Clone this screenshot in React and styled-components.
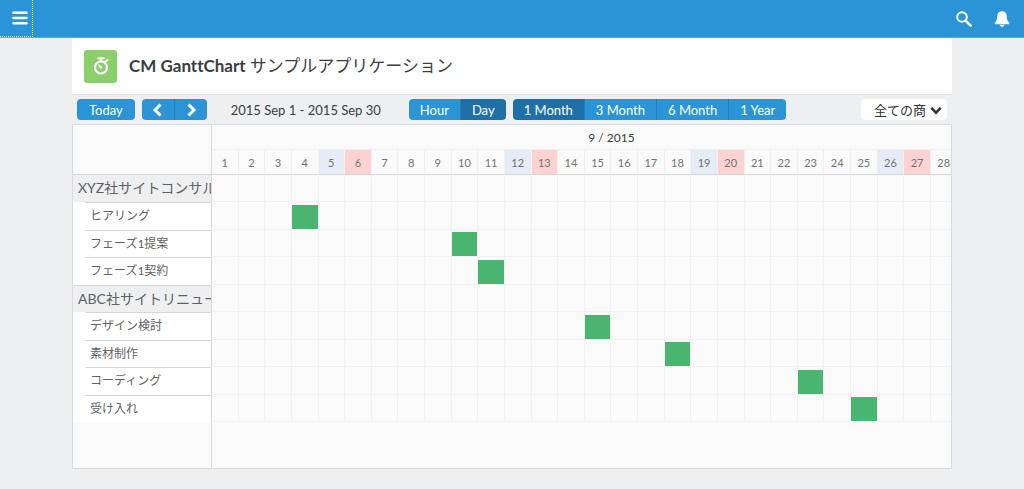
import React, { useState } from 'react'
import styled, { createGlobalStyle } from 'styled-components'

const GlobalStyle = createGlobalStyle`
* {
  box-sizing: border-box;
}
body {
  margin: 0;
  background: #eeeff1;
  color: #3a3d40;
  font-family: Lato, "Noto Sans CJK JP", sans-serif;
  font-size: 13px;
}
button, select {
  font-family: inherit;
  font-size: 13px;
  border: none;
  margin: 0;
  padding: 0;
  cursor: pointer;
}
`

const TopBar = styled.header`
display: flex;
align-items: center;
justify-content: space-between;
height: 38px;
background: #2a94d6;
border-bottom: 1px solid #55abe2;
`
const MenuButton = styled.button`
display: flex;
align-items: center;
justify-content: flex-end;
width: 33px;
height: 37px;
padding-right: 4px;
background: transparent;
border-right: 1px dotted #d4e9f7;
border-bottom: 1px dotted #d4e9f7;
`
const TopActions = styled.div`
display: flex;
gap: 22px;
padding-right: 14px;
`
const IconButton = styled.button`
display: flex;
background: transparent;
`
const Page = styled.main`
margin: 0 72px 20px;
`
const TitleCard = styled.div`
display: flex;
align-items: center;
gap: 12px;
height: 57px;
padding-left: 12px;
background: white;
border-bottom: 1px solid #e0e5ea;
`
const AppIcon = styled.div`
display: flex;
align-items: center;
justify-content: center;
width: 33px;
height: 33px;
background: #8bcf6a;
border-radius: 3px;
`
const Title = styled.h1`
margin: 0;
font-size: 17px;
font-weight: 700;
line-height: 24px;
font-variant-ligatures: none;
`
const TitleSub = styled.span`
font-weight: 400;
`
const Toolbar = styled.div`
display: flex;
align-items: center;
height: 29px;
padding: 0 5px;
`
const ButtonGroup = styled.div`
display: flex;
margin-right: 7px;
border-radius: 4px;
overflow: hidden;
`
const ToolButton = styled.button`
display: flex;
align-items: center;
justify-content: center;
height: 21px;
padding: 0 ${props => props.$pad || 11}px;
background: ${props => props.$active ? '#1f70a6' : '#2a94d6'};
color: white;
line-height: 20px;
& + & {
  border-left: 1px solid #2381bd;
}
`
const Period = styled.div`
padding: 0 28px 0 17px;
line-height: 20px;
`
const FilterBox = styled.div`
display: grid;
align-items: center;
width: 86px;
margin-left: auto;
color: #333;
& > * {
  grid-area: 1 / 1;
}
& > svg {
  justify-self: end;
  margin-right: 5px;
  pointer-events: none;
}
`
const Filter = styled.select`
appearance: none;
width: 100%;
height: 21px;
padding: 0 20px 0 13px;
background: white;
color: inherit;
border-radius: 4px;
`
const ChartPanel = styled.div`
overflow: hidden;
background: #fafafa;
border: 1px solid #d8dadc;
`
const Chart = styled.table`
width: calc(100% + 60px);
height: 343px;
table-layout: fixed;
border-collapse: separate;
border-spacing: 0;
`
const NameCol = styled.col`
width: 139px;
`
const Cell = styled.td`
padding: 0;
border-right: 1px solid #f2f2f3;
border-bottom: 1px solid #f2f2f3;
vertical-align: bottom;
`
const Corner = styled.td`
padding: 0;
border-right: 1px solid #d8dadc;
border-bottom: 1px solid #d2d4d6;
`
const MonthHead = styled.th`
height: 25px;
padding: 0;
border-bottom: 1px solid #efeff0;
font-size: 12px;
font-weight: 400;
`
const DayHead = styled.th`
height: 25px;
padding: 0;
background: ${props => props.$weekend === 'sat' ? '#e5ecf5' : props.$weekend === 'sun' ? '#ffd2d2' : 'transparent'};
border-right: 1px solid #f0f0f1;
border-bottom: 1px solid #d2d4d6;
color: #707274;
font-size: 11px;
font-weight: 400;
`
const NameCell = styled.th`
padding: ${props => props.$group ? 0 : '0 0 0 12px'};
background: ${props => props.$group ? '#eeeff0' : 'white'};
border-right: 1px solid #d8dadc;
color: #5f6164;
font-size: ${props => props.$group ? 14 : 12}px;
font-weight: 400;
text-align: left;
vertical-align: top;
white-space: nowrap;
overflow: hidden;
`
const TaskName = styled.div`
height: 27px;
padding-left: 5px;
border-top: 1px solid #d4d6d8;
line-height: 25px;
`
const GroupName = styled.div`
height: 27px;
padding-left: 5px;
line-height: 25px;
tr:not(:first-child) > th > & {
  border-top: 1px solid #d4d6d8;
}
`
const Filler = styled.td`
height: 46px;
padding: 0;
border-right: 1px solid #d8dadc;
`
const Bar = styled.div`
height: 24px;
background: #4ab471;
`

const rows = [
    { name: 'XYZ社サイトコンサル', group: true },
    { name: 'ヒアリング', day: 4 },
    { name: 'フェーズ1提案', day: 10 },
    { name: 'フェーズ1契約', day: 11 },
    { name: 'ABC社サイトリニュー', group: true },
    { name: 'デザイン検討', day: 15 },
    { name: '素材制作', day: 18 },
    { name: 'コーディング', day: 23 },
    { name: '受け入れ', day: 25 }
]
const days = Array.from({ length: 30 }, (_, i) => i + 1)
const units = ['Hour', 'Day']
const ranges = ['1 Month', '3 Month', '6 Month', '1 Year']

const weekendOf = (day) => {
    // September 2015 starts on a Tuesday
    if (day % 7 === 5) return 'sat'
    if (day % 7 === 6) return 'sun'
    return undefined
}

const Chevron = ({ d, size = 14 }) => (
    <svg width={size} height={size} viewBox='0 0 14 14' fill='none' stroke='currentColor' strokeWidth='3'>
        <path d={d} />
    </svg>
)

const MenuIcon = () => (
    <svg width='16' height='14' viewBox='0 0 16 14' stroke='white' strokeWidth='2.6' strokeLinecap='round'>
        <path d='M1.5 1.8h13M1.5 7h13M1.5 12.2h13' />
    </svg>
)
const SearchIcon = () => (
    <svg width='16' height='16' viewBox='0 0 16 16' fill='none' stroke='white'>
        <circle cx='6' cy='6' r='4.8' strokeWidth='2' />
        <path d='M9.6 9.6L14.6 14.6' strokeWidth='2.6' strokeLinecap='round' />
    </svg>
)
const BellIcon = () => (
    <svg width='16' height='16' viewBox='0 0 16 16' fill='white'>
        <path d='M8 0.3C5 0.3 3.4 2.3 3.3 5C3.2 8.4 2.6 10 0.9 11.6C0.2 12.4 0.5 13.2 1.4 13.2H14.6C15.5 13.2 15.8 12.4 15.1 11.6C13.4 10 12.8 8.4 12.7 5C12.6 2.3 11 0.3 8 0.3Z' />
        <path d='M5.6 13.8H10.4C10 15.2 9.2 15.9 8 15.9C6.8 15.9 6 15.2 5.6 13.8Z' />
    </svg>
)
const StopwatchIcon = () => (
    <svg width='18' height='20' viewBox='0 0 18 20' fill='none' stroke='white'>
        <circle cx='9' cy='11.5' r='6' strokeWidth='2.2' />
        <path d='M6.2 2.3H11.8' strokeWidth='2' strokeLinecap='round' />
        <path d='M9 2.5V5.5' strokeWidth='2.2' />
        <path d='M13.4 5.8L15.4 4' strokeWidth='2' strokeLinecap='round' />
        <path d='M6.3 8.6L9.4 10.3C10.6 11.3 9.4 13.2 8 12.1Z' fill='white' strokeWidth='0.6' />
    </svg>
)

const App = () => {
    const [unit, setUnit] = useState('Day')
    const [range, setRange] = useState('1 Month')
    return (
        <>
            <GlobalStyle />
            <TopBar>
                <MenuButton aria-label='Menu'><MenuIcon /></MenuButton>
                <TopActions>
                    <IconButton aria-label='Search'><SearchIcon /></IconButton>
                    <IconButton aria-label='Notifications'><BellIcon /></IconButton>
                </TopActions>
            </TopBar>
            <Page>
                <TitleCard>
                    <AppIcon><StopwatchIcon /></AppIcon>
                    <Title>CM GanttChart <TitleSub>サンプルアプリケーション</TitleSub></Title>
                </TitleCard>
                <Toolbar>
                    <ButtonGroup>
                        <ToolButton $pad={12}>Today</ToolButton>
                    </ButtonGroup>
                    <ButtonGroup>
                        <ToolButton $pad={9} aria-label='Previous'><Chevron d='M9.5 1.5L4 7L9.5 12.5' /></ToolButton>
                        <ToolButton $pad={9} aria-label='Next'><Chevron d='M4.5 1.5L10 7L4.5 12.5' /></ToolButton>
                    </ButtonGroup>
                    <Period>2015 Sep 1 - 2015 Sep 30</Period>
                    <ButtonGroup>
                        {units.map(u => (
                            <ToolButton key={u} $active={u === unit} onClick={() => setUnit(u)}>{u}</ToolButton>
                        ))}
                    </ButtonGroup>
                    <ButtonGroup>
                        {ranges.map(r => (
                            <ToolButton key={r} $active={r === range} onClick={() => setRange(r)}>{r}</ToolButton>
                        ))}
                    </ButtonGroup>
                    <FilterBox>
                        <Filter aria-label='Filter'>
                            <option>全ての商</option>
                        </Filter>
                        <Chevron size={12} d='M1.5 4.5L7 10L12.5 4.5' />
                    </FilterBox>
                </Toolbar>
                <ChartPanel>
                    <Chart>
                        <colgroup>
                            <NameCol />
                            {days.map(day => <col key={day} />)}
                        </colgroup>
                        <thead>
                            <tr>
                                <Corner rowSpan={2} />
                                <MonthHead colSpan={30}>9 / 2015</MonthHead>
                            </tr>
                            <tr>
                                {days.map(day => (
                                    <DayHead key={day} $weekend={weekendOf(day)}>{day}</DayHead>
                                ))}
                            </tr>
                        </thead>
                        <tbody>
                            {rows.map(row => (
                                <tr key={row.name}>
                                    <NameCell scope='row' $group={row.group}>
                                        {row.group ? <GroupName>{row.name}</GroupName> : <TaskName>{row.name}</TaskName>}
                                    </NameCell>
                                    {days.map(day => (
                                        <Cell key={day}>{row.day === day && <Bar />}</Cell>
                                    ))}
                                </tr>
                            ))}
                        </tbody>
                        <tfoot>
                            <tr>
                                <Filler />
                                <td colSpan={30} />
                            </tr>
                        </tfoot>
                    </Chart>
                </ChartPanel>
            </Page>
        </>
    )
}

export default App
